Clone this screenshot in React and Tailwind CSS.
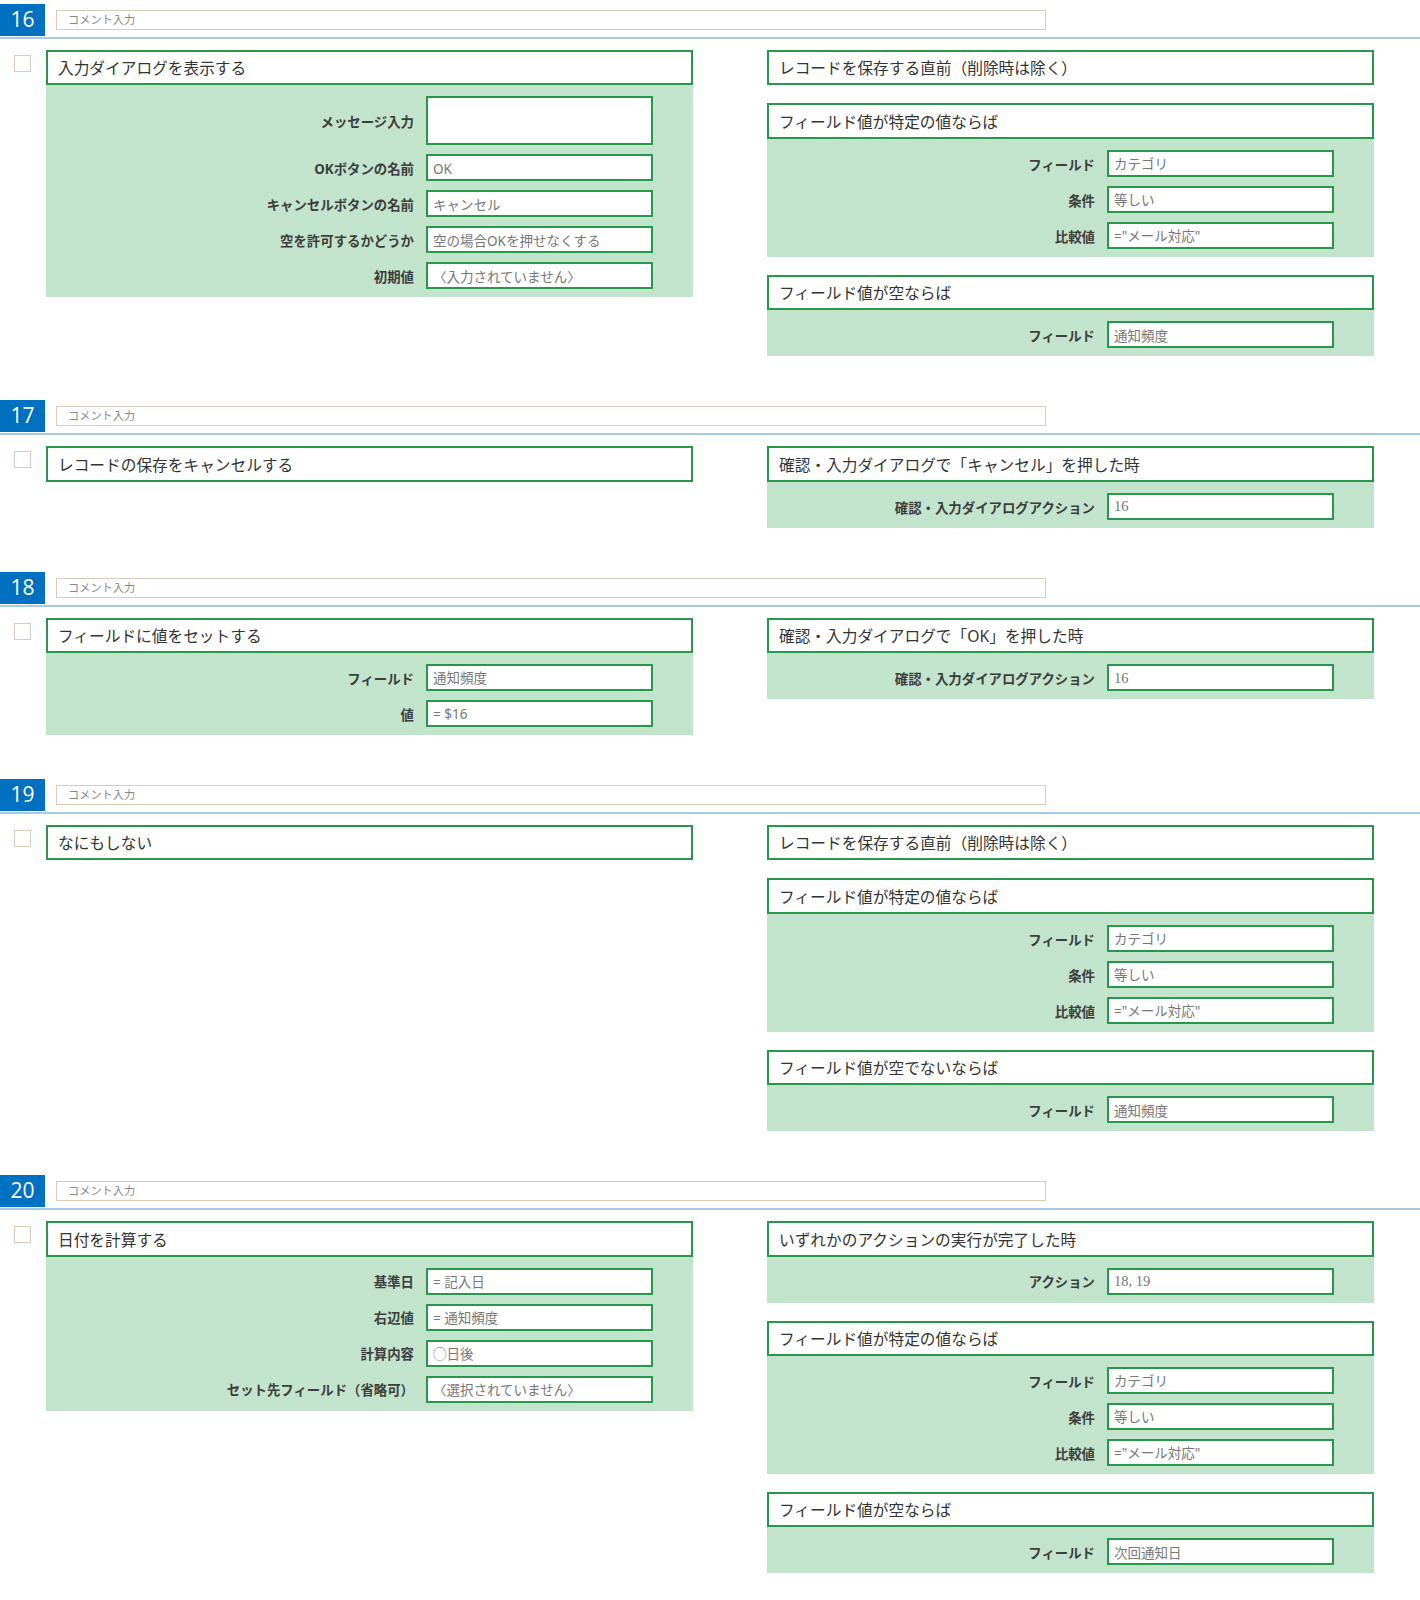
import React from 'react';

const sections = [
  {
    no: 16,
    left: [
      {
        title: '入力ダイアログを表示する',
        rows: [
          { label: 'メッセージ入力', value: '', tall: true },
          { label: 'OKボタンの名前', value: 'OK' },
          { label: 'キャンセルボタンの名前', value: 'キャンセル' },
          { label: '空を許可するかどうか', value: '空の場合OKを押せなくする' },
          { label: '初期値', value: '〈入力されていません〉' },
        ],
      },
    ],
    right: [
      { title: 'レコードを保存する直前（削除時は除く）' },
      {
        title: 'フィールド値が特定の値ならば',
        rows: [
          { label: 'フィールド', value: 'カテゴリ' },
          { label: '条件', value: '等しい' },
          { label: '比較値', value: '="メール対応"' },
        ],
      },
      { title: 'フィールド値が空ならば', rows: [{ label: 'フィールド', value: '通知頻度' }] },
    ],
  },
  {
    no: 17,
    left: [{ title: 'レコードの保存をキャンセルする' }],
    right: [
      {
        title: '確認・入力ダイアログで「キャンセル」を押した時',
        rows: [{ label: '確認・入力ダイアログアクション', value: '16', serif: true }],
      },
    ],
  },
  {
    no: 18,
    left: [
      {
        title: 'フィールドに値をセットする',
        rows: [
          { label: 'フィールド', value: '通知頻度' },
          { label: '値', value: '= $16' },
        ],
      },
    ],
    right: [
      {
        title: '確認・入力ダイアログで「OK」を押した時',
        rows: [{ label: '確認・入力ダイアログアクション', value: '16', serif: true }],
      },
    ],
  },
  {
    no: 19,
    left: [{ title: 'なにもしない' }],
    right: [
      { title: 'レコードを保存する直前（削除時は除く）' },
      {
        title: 'フィールド値が特定の値ならば',
        rows: [
          { label: 'フィールド', value: 'カテゴリ' },
          { label: '条件', value: '等しい' },
          { label: '比較値', value: '="メール対応"' },
        ],
      },
      { title: 'フィールド値が空でないならば', rows: [{ label: 'フィールド', value: '通知頻度' }] },
    ],
  },
  {
    no: 20,
    left: [
      {
        title: '日付を計算する',
        rows: [
          { label: '基準日', value: '= 記入日' },
          { label: '右辺値', value: '= 通知頻度' },
          { label: '計算内容', value: '◯日後' },
          { label: 'セット先フィールド（省略可）', value: '〈選択されていません〉' },
        ],
      },
    ],
    right: [
      {
        title: 'いずれかのアクションの実行が完了した時',
        rows: [{ label: 'アクション', value: '18, 19', serif: true }],
      },
      {
        title: 'フィールド値が特定の値ならば',
        rows: [
          { label: 'フィールド', value: 'カテゴリ' },
          { label: '条件', value: '等しい' },
          { label: '比較値', value: '="メール対応"' },
        ],
      },
      { title: 'フィールド値が空ならば', rows: [{ label: 'フィールド', value: '次回通知日' }] },
    ],
  },
];

function Block({ title, rows }) {
  return (
    <div>
      <div className="flex h-[35.4px] items-center border-2 border-[#27984a] bg-white pl-[10px] pt-[3px] text-[15.7px] text-[#333]">
        {title}
      </div>
      {rows ? (
        <div className="flex flex-col gap-[9px] bg-[#c3e4cc] pb-[8px] pr-[40px] pt-[11px]">
          {rows.map((row) => (
            <div key={row.label} className="flex items-center justify-end">
              <span className="mr-[12px] pt-[3px] text-[13.4px] font-bold text-[#3d3d3d]">{row.label}</span>
              <div
                className={`flex w-[227px] items-center border-2 border-[#27984a] bg-white pl-[5px] pt-[2px] text-[#777] ${
                  row.tall ? 'h-[49px]' : 'h-[27px]'
                } ${row.serif ? 'text-[14.5px]' : 'text-[13.5px]'}`}
                style={row.serif ? { fontFamily: '"Liberation Serif", serif' } : undefined}
              >
                {row.value}
              </div>
            </div>
          ))}
        </div>
      ) : null}
    </div>
  );
}

function Section({ no, left, right }) {
  return (
    <section className="mb-[44px]">
      <div className="flex h-[35px] w-full border-b-2 border-[#a6cbe9]">
        <div
          className="flex h-[32px] w-[45px] items-center justify-center bg-[#0070c0] text-[21px] text-white"
          style={{ fontFamily: '"Open Sans", "Noto Sans", sans-serif' }}
        >
          {no}
        </div>
        <div className="ml-[11px] mt-[6px] flex h-[20px] w-[990px] items-center border border-[#dccbb8] bg-white pl-[11px] pt-[1px] text-[11.2px] text-[#888]">
          コメント入力
        </div>
      </div>
      <div className="mt-[11px] flex">
        <div className="w-[46px] shrink-0">
          <div className="ml-[14px] mt-[5px] h-[17px] w-[17px] border border-[#dccbb8] bg-white" />
        </div>
        <div className="flex w-[647px] flex-col gap-[18px]">
          {left.map((b, i) => (
            <Block key={i} {...b} />
          ))}
        </div>
        <div className="ml-[74px] flex w-[607px] flex-col gap-[18px]">
          {right.map((b, i) => (
            <Block key={i} {...b} />
          ))}
        </div>
      </div>
    </section>
  );
}

export default function App() {
  return (
    <div
      className="min-h-[1600px] bg-white pt-[4px]"
      style={{ fontFamily: '"Noto Sans", "Noto Sans CJK JP", sans-serif' }}
    >
      {sections.map((s) => (
        <Section key={s.no} {...s} />
      ))}
    </div>
  );
}
